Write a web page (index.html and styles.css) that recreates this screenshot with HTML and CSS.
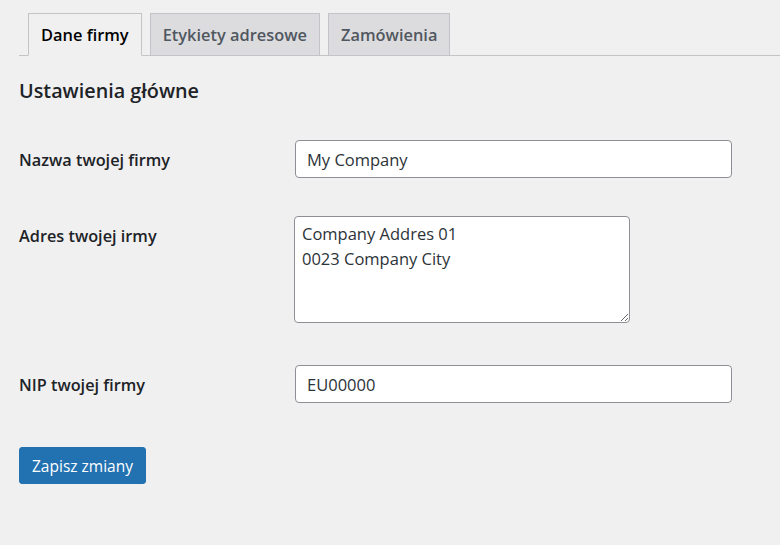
FILE: index.html
```html
<!DOCTYPE html>
<html lang="pl">
<head>
    <meta charset="UTF-8">
    <meta name="viewport" content="width=device-width, initial-scale=1.0">
    <title>Dane firmy</title>
    <link rel="stylesheet" href="styles.css">
</head>
<body>
    <div class="wrap">
        <nav class="nav-tab-wrapper">
            <a href="#" class="nav-tab nav-tab-active">Dane firmy</a>
            <a href="#" class="nav-tab">Etykiety adresowe</a>
            <a href="#" class="nav-tab">Zamówienia</a>
        </nav>

        <h2>Ustawienia główne</h2>

        <form class="settings-form" onsubmit="event.preventDefault()">
            <div class="form-row">
                <label for="company_name">Nazwa twojej firmy</label>
                <input type="text" id="company_name" class="regular-text" value="My Company">
            </div>
            <div class="form-row">
                <label for="company_address">Adres twojej irmy</label>
                <textarea id="company_address" rows="4">Company Addres 01
0023 Company City</textarea>
            </div>
            <div class="form-row">
                <label for="company_nip">NIP twojej firmy</label>
                <input type="text" id="company_nip" class="regular-text" value="EU00000">
            </div>
            <p class="submit">
                <input type="submit" class="button-primary" value="Zapisz zmiany">
            </p>
        </form>
    </div>
</body>
</html>
```

FILE: styles.css
```css
body {
    font-family: 'Open Sans', 'Noto Sans', sans-serif;
    background-color: #f0f0f1;
    color: #1d2327;
    margin: 0;
    padding: 0;
}
.wrap {
    padding: 13px 0 0 19px;
}
.nav-tab-wrapper {
    display: flex;
    gap: 8px;
    padding-left: 9px;
    border-bottom: 1px solid #c3c4c7;
}
.nav-tab {
    display: block;
    height: 41px;
    line-height: 42px;
    padding: 0 12px;
    margin-bottom: -1px;
    font-size: 16.4px;
    font-weight: 600;
    color: #50575e;
    text-decoration: none;
    background-color: #dcdcde;
    border: 1px solid #c3c4c7;
}
.nav-tab-active {
    color: #000;
    background-color: #f0f0f1;
    border-bottom-color: #f0f0f1;
}
h2 {
    font-size: 19.8px;
    font-weight: 600;
    line-height: 26px;
    margin: 22px 0 17px;
    color: #1d2327;
}
.form-row {
    display: grid;
    grid-template-columns: 276px 1fr;
    align-items: start;
    padding: 19px 0;
}
.form-row label {
    padding-top: 9px;
    font-size: 16.3px;
    font-weight: 600;
    line-height: 23px;
    color: #1d2327;
}
.regular-text {
    box-sizing: border-box;
    width: 437px;
    height: 38px;
    padding: 0 11px;
    font-family: inherit;
    font-size: 16.5px;
    color: #2c3338;
    background: #fff;
    border: 1px solid #8c8f94;
    border-radius: 4px;
}
textarea {
    display: block;
    box-sizing: border-box;
    width: 336px;
    height: 107px;
    margin: 0 0 4px -1px;
    padding: 4px 7px;
    font-family: inherit;
    font-size: 16.5px;
    line-height: 25px;
    color: #2c3338;
    background: #fff;
    border: 1px solid #8c8f94;
    border-radius: 4px;
}
.submit {
    margin: 25px 0 0;
}
.button-primary {
    height: 37px;
    padding: 0 12px;
    font-family: inherit;
    font-size: 15.5px;
    color: #fff;
    background-color: #2271b1;
    border: 1px solid #2271b1;
    border-radius: 3px;
    cursor: pointer;
}
```
